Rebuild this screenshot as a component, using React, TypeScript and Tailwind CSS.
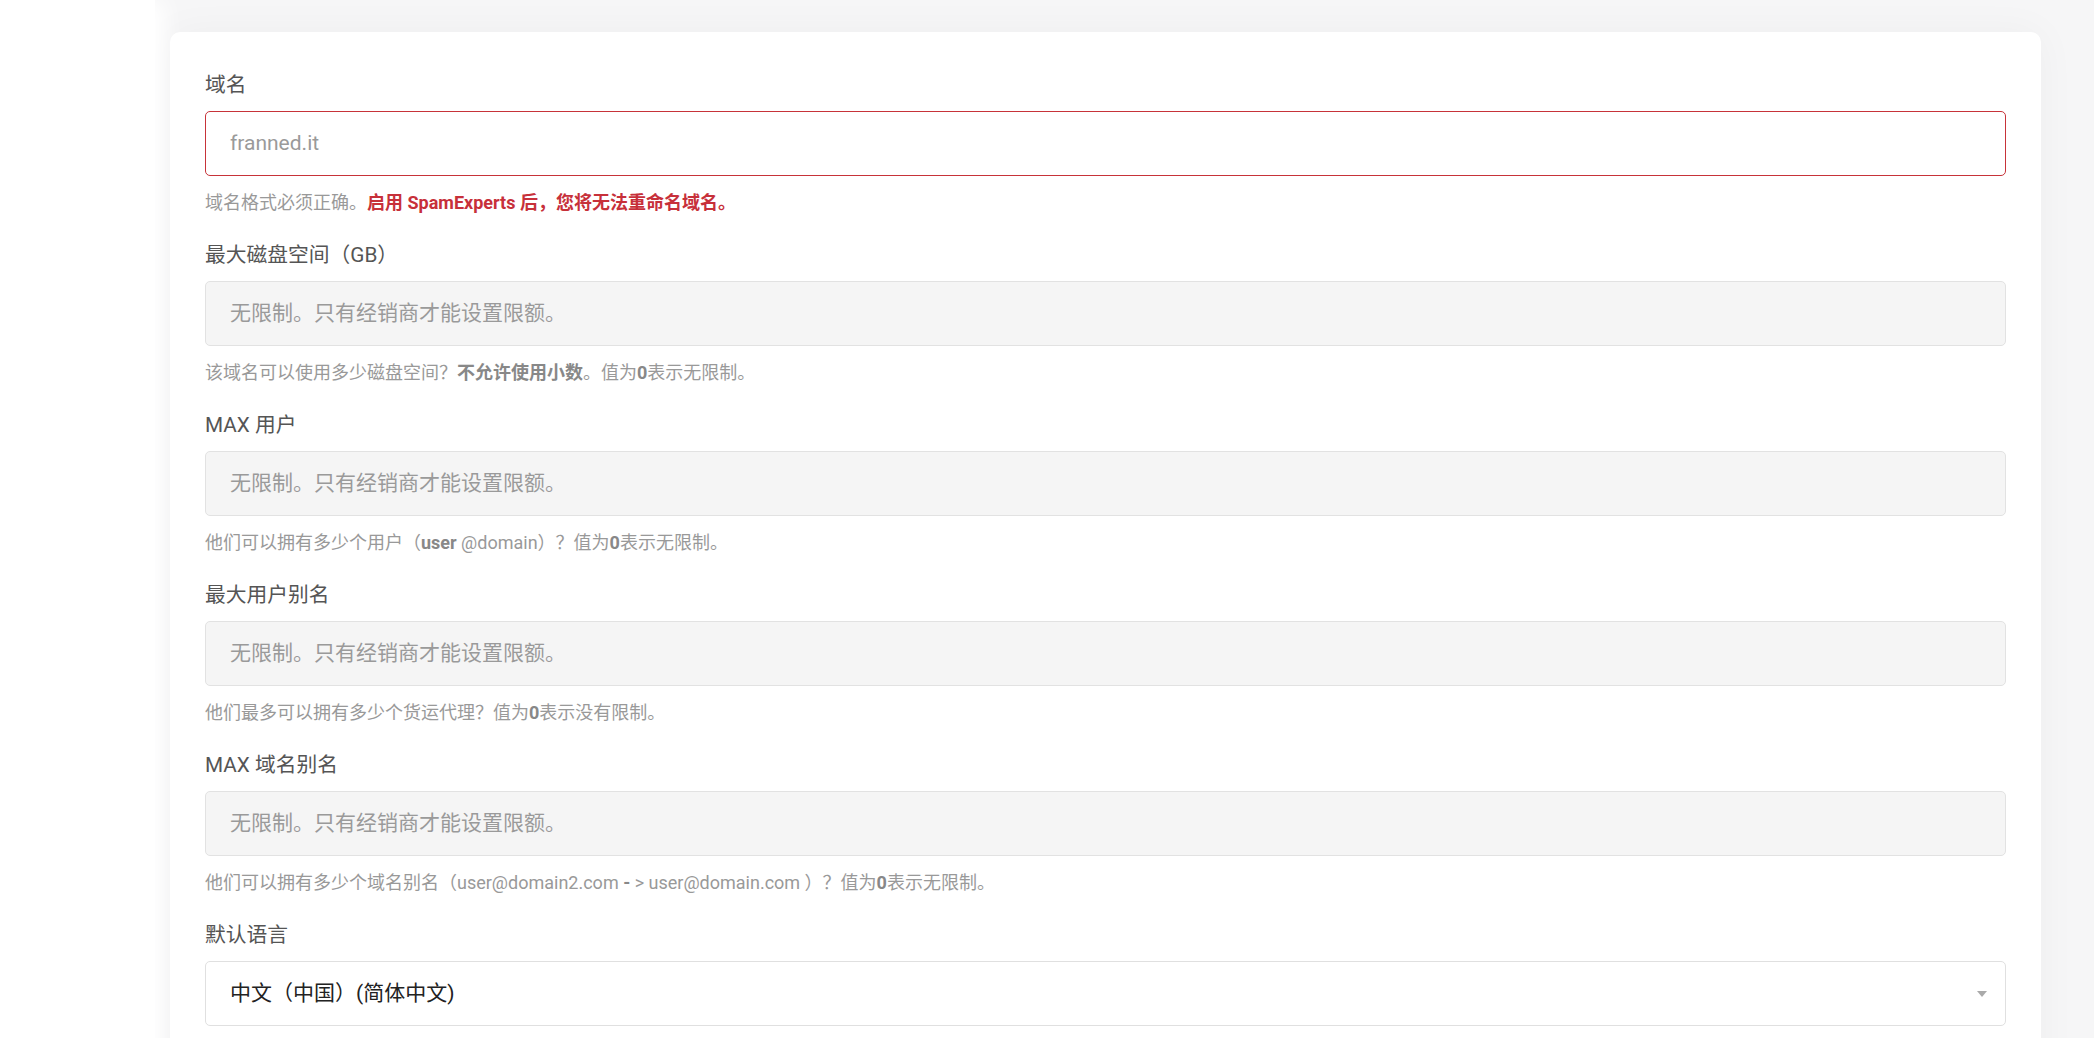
import React from 'react';

const font = "font-['Roboto','Noto_Sans_CJK_SC',sans-serif]";

interface FieldProps {
    label: string;
    value: string;
    help: React.ReactNode;
    error?: boolean;
    disabled?: boolean;
}

function Field({ label, value, help, error, disabled }: FieldProps) {
    const box = error
        ? 'border-[#c73339] bg-white text-[#9a9a9a]'
        : disabled
          ? 'border-[#e2e2e2] bg-[#f5f5f5] text-[#9a9a9a]'
          : 'border-[#e0e0e0] bg-white text-[#9a9a9a]';

    return (
        <div className="pb-[24px]">
            <label className="block text-[20.75px] leading-[30px] text-[#555555]">{label}</label>
            <div className={`mt-[11px] flex h-[65px] items-center rounded-[5px] border px-[24px] text-[21px] ${box}`}>
                {value}
            </div>
            <p className="mt-[14px] text-[18px] leading-[26px] text-[#999999]">{help}</p>
        </div>
    );
}

export default function App() {
    const unlimited = '无限制。只有经销商才能设置限额。';

    return (
        <div className={`flex min-h-screen bg-white ${font}`}>
            <aside className="w-[155px] shrink-0 bg-white shadow-[10px_0_20px_rgba(255,255,255,1)] relative z-10" />
            <main className="flex-1 bg-[#f6f6f7] pl-[15px] pr-[53px] pt-[32px]">
                <div className="rounded-[10px] bg-white px-[35px] pt-[38px] pb-[60px] shadow-[0_0_40px_rgba(0,0,0,0.04)]">
                    <Field
                        label="域名"
                        value="franned.it"
                        error
                        help={
                            <>
                                域名格式必须正确。
                                <span className="font-bold text-[#c7303a]">启用 SpamExperts 后，您将无法重命名域名。</span>
                            </>
                        }
                    />
                    <Field
                        label="最大磁盘空间（GB）"
                        value={unlimited}
                        disabled
                        help={
                            <>
                                该域名可以使用多少磁盘空间？<b className="text-[#888888]">不允许使用小数</b>。值为
                                <b className="text-[#888888]">0</b>表示无限制。
                            </>
                        }
                    />
                    <Field
                        label="MAX 用户"
                        value={unlimited}
                        disabled
                        help={
                            <>
                                他们可以拥有多少个用户（<b className="text-[#888888]">user</b> @domain）？值为
                                <b className="text-[#888888]">0</b>表示无限制。
                            </>
                        }
                    />
                    <Field
                        label="最大用户别名"
                        value={unlimited}
                        disabled
                        help={
                            <>
                                他们最多可以拥有多少个货运代理？值为<b className="text-[#888888]">0</b>表示没有限制。
                            </>
                        }
                    />
                    <Field
                        label="MAX 域名别名"
                        value={unlimited}
                        disabled
                        help={
                            <>
                                他们可以拥有多少个域名别名（user@domain2.com <b className="text-[#888888]">-</b> &gt;
                                user@domain.com ）？值为<b className="text-[#888888]">0</b>表示无限制。
                            </>
                        }
                    />
                    <div>
                        <label className="block text-[20.75px] leading-[30px] text-[#555555]">默认语言</label>
                        <div className="mt-[11px] flex h-[65px] items-center justify-between rounded-[5px] border border-[#e0e0e0] bg-white pl-[24px] pr-[16px] text-[21px] text-[#222222]">
                            <span>中文（中国）(简体中文)</span>
                            <svg width="10" height="6" viewBox="0 0 10 6" className="mr-[2px]">
                                <path d="M0 0h10L5 6z" fill="#aaaaaa" />
                            </svg>
                        </div>
                    </div>
                </div>
            </main>
        </div>
    );
}
